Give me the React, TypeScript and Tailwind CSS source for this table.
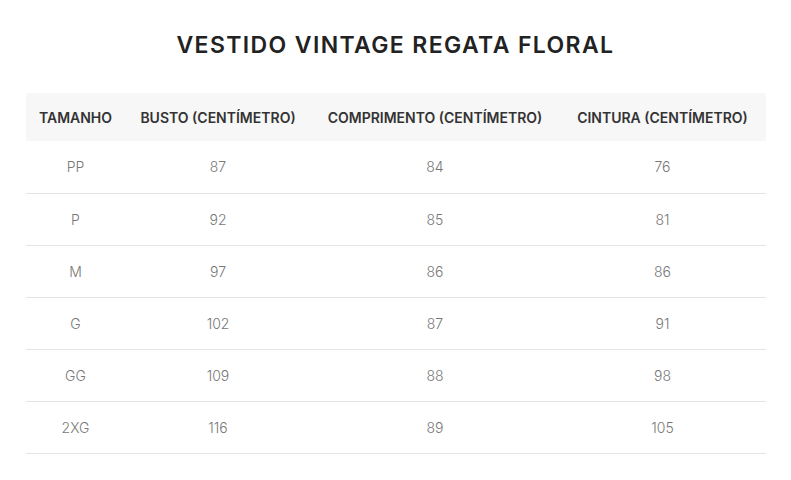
import React from "react";

const rows = [
  ["PP", "87", "84", "76"],
  ["P", "92", "85", "81"],
  ["M", "97", "86", "86"],
  ["G", "102", "87", "91"],
  ["GG", "109", "88", "98"],
  ["2XG", "116", "89", "105"],
];

export default function App() {
  return (
    <div className="w-[791px] h-[480px] bg-white px-[26px] pt-[31px]" style={{ fontFamily: "Inter, 'Liberation Sans', sans-serif" }}>
      <h1 className="text-center text-[23px] leading-[28px] font-semibold tracking-[0.06em] text-[#222]">
        VESTIDO VINTAGE REGATA FLORAL
      </h1>
      <table className="mt-[34px] w-[740px] border-collapse table-fixed">
        <colgroup>
          <col className="w-[99px]" />
          <col className="w-[186px]" />
          <col className="w-[248px]" />
          <col className="w-[207px]" />
        </colgroup>
        <thead>
          <tr className="bg-[#f7f7f7] h-[48px]">
            {["TAMANHO", "BUSTO (CENTÍMETRO)", "COMPRIMENTO (CENTÍMETRO)", "CINTURA (CENTÍMETRO)"].map((h) => (
              <th key={h} className="text-center text-[14px] font-semibold text-[#333] whitespace-nowrap p-0">
                {h}
              </th>
            ))}
          </tr>
        </thead>
        <tbody>
          {rows.map((r) => (
            <tr key={r[0]} className="h-[52px] border-b border-[#e5e5e5]">
              {r.map((c, i) => (
                <td key={i} className="text-center text-[14px] font-light text-[#777] p-0">
                  {c}
                </td>
              ))}
            </tr>
          ))}
        </tbody>
      </table>
    </div>
  );
}
